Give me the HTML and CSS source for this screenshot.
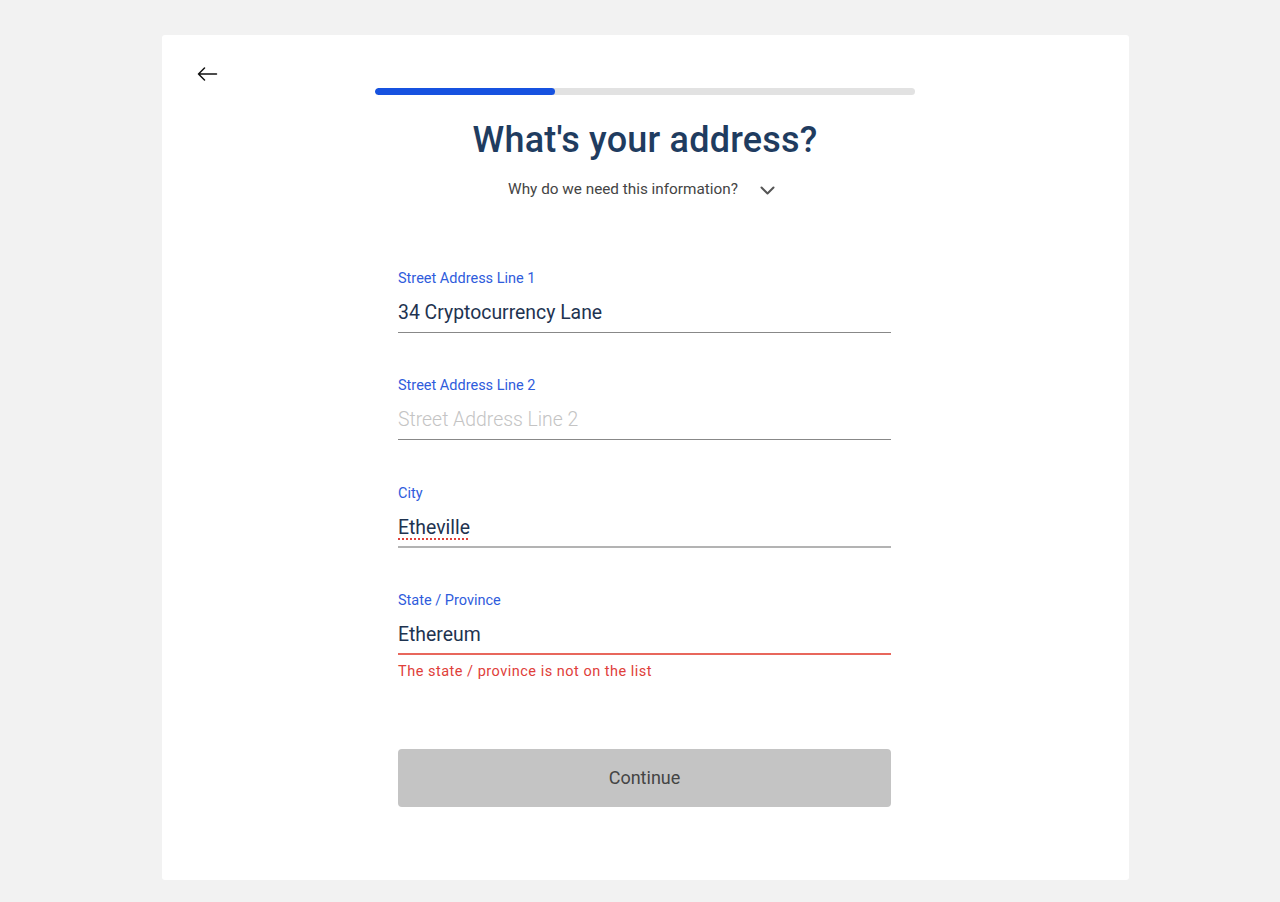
FILE: index.html
```html
<!DOCTYPE html>
<html lang="en">
<head>
<meta charset="utf-8">
<title>What's your address?</title>
<link rel="stylesheet" href="styles.css">
</head>
<body>
<div class="card">
  <div class="back-col">
    <button class="back" aria-label="Back">
      <svg width="21" height="14" viewBox="0 0 21 14" fill="none" stroke="#111" stroke-width="1.5" stroke-linecap="round" stroke-linejoin="round"><path d="M19.5 7H1.5M7.5 1L1.5 7l6 6"/></svg>
    </button>
  </div>
  <main class="main">
    <div class="progress"><div class="progress-fill" style="width:33.3%"></div></div>
    <h1 class="title">What's your address?</h1>
    <div class="why">
      <span>Why do we need this information?</span>
      <svg class="chev" width="15" height="9" viewBox="0 0 15 9" fill="none" stroke="#555" stroke-width="2" stroke-linecap="round" stroke-linejoin="round"><path d="M1.5 1.5L7.5 7.5l6-6"/></svg>
    </div>
    <form class="form">
      <div class="field">
        <label class="label">Street Address Line 1</label>
        <div class="value">34 Cryptocurrency Lane</div>
      </div>
      <div class="field">
        <label class="label">Street Address Line 2</label>
        <div class="value placeholder">Street Address Line 2</div>
      </div>
      <div class="field">
        <label class="label">City</label>
        <div class="value focus"><span class="spell">Etheville</span></div>
      </div>
      <div class="field">
        <label class="label">State / Province</label>
        <div class="value invalid">Ethereum</div>
        <div class="error-text">The state / province is not on the list</div>
      </div>
      <button type="button" class="continue">Continue</button>
    </form>
  </main>
</div>
</body>
</html>
```
FILE: styles.css
```css
* { box-sizing: border-box; }
html, body { margin: 0; }
body {
  background: #f2f2f2;
  font-family: Roboto, "Liberation Sans", Arial, sans-serif;
  padding-top: 35px;
  height: 902px;
  overflow: hidden;
}
.card {
  margin-left: 162px;
  width: 967px;
  height: 845px;
  background: #fff;
  border-radius: 3px;
  display: grid;
  grid-template-columns: 213px 540px 1fr;
  align-items: start;
}
.back-col { padding: 32px 0 0 35px; }
.back {
  border: 0; background: none; padding: 0; margin: 0;
  width: 21px; height: 14px; display: block; cursor: pointer;
}
.back svg { display: block; }
.main { padding-top: 53px; display: flex; flex-direction: column; align-items: center; }
.progress {
  width: 540px; height: 7px; border-radius: 4px; background: #e2e2e2; overflow: hidden;
}
.progress-fill { height: 100%; background: #1652e0; border-radius: 4px; }
.title {
  margin: 24px 0 0;
  font-size: 36px; font-weight: 500; line-height: 42px;
  color: #1f3c60; letter-spacing: 0.2px;
}
.why {
  margin-top: 19px;
  display: flex; align-items: center; gap: 22px;
  font-size: 15.3px; line-height: 19px; color: #444;
  padding-right: 7px;
}
.chev { margin-top: 2px; }
.form {
  width: 493px; margin-top: 72px; margin-left: -1px;
  display: flex; flex-direction: column;
}
.field { margin-bottom: 45.3px; }
.label {
  display: block;
  font-size: 14.5px; line-height: 16px; color: #2f5cdc;
}
.value {
  margin-top: 14px;
  font-size: 19.4px; line-height: 24px; height: 32px;
  padding-bottom: 7px;
  color: #1e3350;
  border-bottom: 1px solid #888;
}
.placeholder { color: #c4c4c4; font-weight: 300; }
.value.focus { border-bottom: 2px solid #b3b3b3; }
.spell {
  text-decoration: underline dotted #e0403a;
  text-decoration-thickness: 2px;
  text-underline-offset: 5px;
}
.value.invalid { border-bottom: 2px solid #e8675c; }
.error-text {
  margin-top: 9px;
  font-size: 14.5px; line-height: 16px; color: #e0403a; letter-spacing: 0.5px;
}
.field:last-of-type { margin-bottom: 0; }
.continue {
  margin-top: 69px;
  height: 58px; width: 493px;
  border: 0; border-radius: 4px;
  background: #c4c4c4; color: #444;
  font-family: inherit; font-size: 18px;
}
```
